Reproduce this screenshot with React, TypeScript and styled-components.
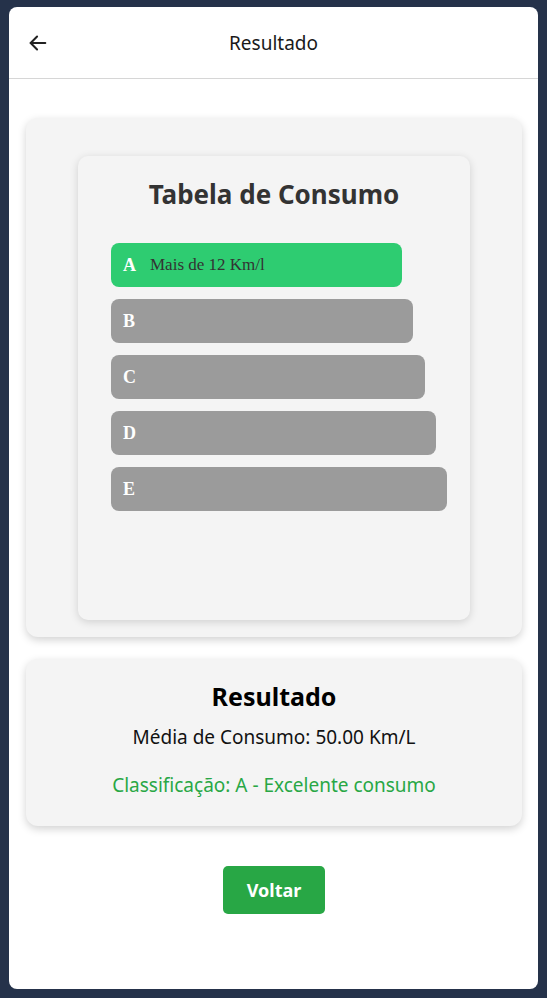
import React from "react";
import styled, { createGlobalStyle } from "styled-components";

const GlobalStyle = createGlobalStyle`
  html, body {
    margin: 0;
    padding: 0;
    background: #25324a;
  }
  * {
    box-sizing: border-box;
  }
`;

const Frame = styled.div`
  height: 998px;
  padding: 7px 9px 9px 9px;
`;

const Screen = styled.div`
  height: 100%;
  background: #ffffff;
  border-radius: 8px;
  overflow: hidden;
  display: flex;
  flex-direction: column;
  font-family: "Noto Sans", "Open Sans", sans-serif;
`;

const Header = styled.header`
  height: 72px;
  flex-shrink: 0;
  display: grid;
  grid-template-columns: 56px 1fr 56px;
  align-items: center;
  border-bottom: 1px solid #d6d6d6;
`;

const BackButton = styled.button`
  border: none;
  background: none;
  padding: 0 0 0 18px;
  display: flex;
  align-items: center;
  color: #222;
`;

const HeaderTitle = styled.h1`
  margin: 0;
  text-align: center;
  font-size: 19px;
  font-weight: 400;
  color: #1a1a1a;
`;

const Content = styled.main`
  padding: 39px 16px 0 17px;
  display: flex;
  flex-direction: column;
  gap: 22px;
`;

const Card = styled.section`
  background: #f4f4f4;
  border-radius: 12px;
  box-shadow: 0 3px 8px rgba(0, 0, 0, 0.18);
`;

const TableCard = styled(Card)`
  padding: 38px 52px 17px 52px;
  height: 519px;
`;

const InnerCard = styled.div`
  background: #f4f4f4;
  border-radius: 10px;
  box-shadow: 0 2px 8px rgba(0, 0, 0, 0.15);
  height: 100%;
  padding: 20px 33px;
`;

const TableTitle = styled.h2`
  margin: 0 0 31px 0;
  text-align: center;
  font-size: 26px;
  font-weight: 700;
  color: #333;
`;

const Bars = styled.div`
  display: flex;
  flex-direction: column;
  gap: 12px;
`;

const Bar = styled.div<{ $active?: boolean }>`
  height: 44px;
  border-radius: 8px;
  background: ${(p) => (p.$active ? "#2ecc71" : "#9b9b9b")};
  display: flex;
  align-items: center;
  padding-left: 12px;
  gap: 14px;
  font-family: "Liberation Serif", "Times New Roman", serif;
`;

const BarLetter = styled.span`
  color: #fff;
  font-weight: 700;
  font-size: 18px;
`;

const BarLabel = styled.span`
  color: #333;
  font-size: 17px;
`;

const ResultCard = styled(Card)`
  padding: 20px 16px 28px;
  display: flex;
  flex-direction: column;
  align-items: center;
`;

const ResultTitle = styled.h2`
  margin: 0 0 11px 0;
  font-size: 25px;
  font-weight: 700;
  color: #000;
`;

const ResultLine = styled.p<{ $green?: boolean }>`
  margin: 0;
  font-size: 19px;
  color: ${(p) => (p.$green ? "#28a745" : "#111")};
  & + & {
    margin-top: 22px;
  }
`;

const Footer = styled.div`
  display: flex;
  justify-content: center;
  padding-top: 18px;
`;

const Voltar = styled.button`
  width: 102px;
  height: 48px;
  border: none;
  border-radius: 5px;
  background: #28a745;
  color: #fff;
  font-family: "Noto Sans", "Open Sans", sans-serif;
  font-size: 18px;
  font-weight: 700;
`;

const levels = [
  { letter: "A", width: 291, label: "Mais de 12 Km/l" },
  { letter: "B", width: 302 },
  { letter: "C", width: 314 },
  { letter: "D", width: 325 },
  { letter: "E", width: 336 },
];

const App: React.FC = () => {
  const current = "A";
  return (
    <Frame>
      <GlobalStyle />
      <Screen>
        <Header>
          <BackButton aria-label="Voltar">
            <svg width="22" height="22" viewBox="0 0 24 24" fill="none" stroke="currentColor" strokeWidth="2.2" strokeLinecap="round" strokeLinejoin="round">
              <path d="M20 12H4" />
              <path d="M11 5l-7 7 7 7" />
            </svg>
          </BackButton>
          <HeaderTitle>Resultado</HeaderTitle>
          <span />
        </Header>
        <Content>
          <TableCard>
            <InnerCard>
              <TableTitle>Tabela de Consumo</TableTitle>
              <Bars>
                {levels.map((l) => (
                  <Bar key={l.letter} $active={l.letter === current} style={{ width: l.width }}>
                    <BarLetter>{l.letter}</BarLetter>
                    {l.letter === current && l.label ? <BarLabel>{l.label}</BarLabel> : null}
                  </Bar>
                ))}
              </Bars>
            </InnerCard>
          </TableCard>
          <ResultCard>
            <ResultTitle>Resultado</ResultTitle>
            <ResultLine>Média de Consumo: 50.00 Km/L</ResultLine>
            <ResultLine $green>Classificação: A - Excelente consumo</ResultLine>
          </ResultCard>
          <Footer>
            <Voltar>Voltar</Voltar>
          </Footer>
        </Content>
      </Screen>
    </Frame>
  );
};

export default App;
